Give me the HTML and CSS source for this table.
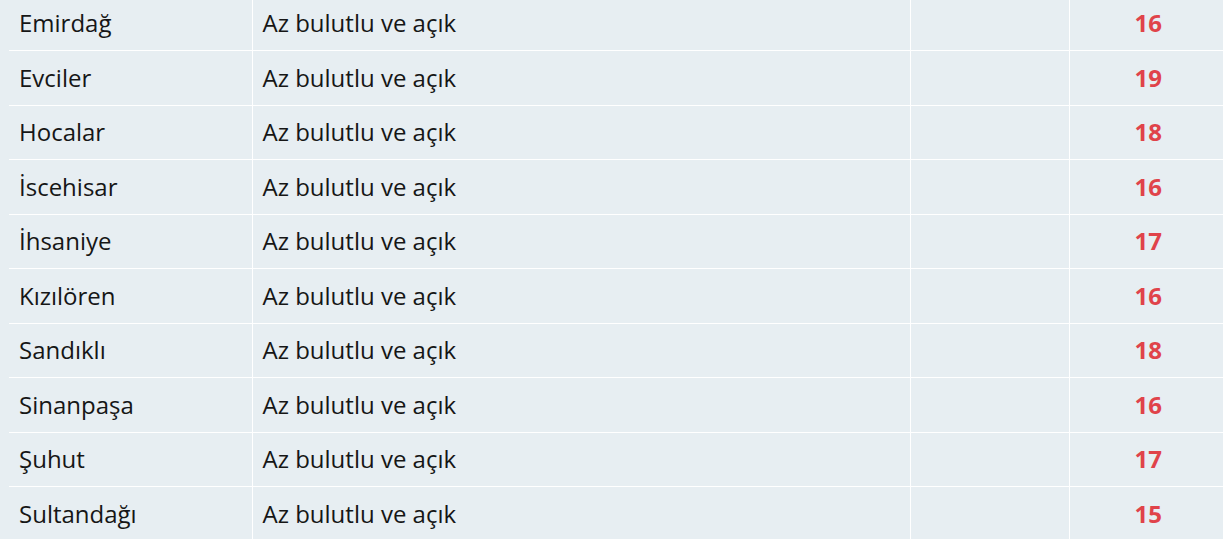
FILE: index.html
```html
<!DOCTYPE html>
<html lang="tr">
<head>
<meta charset="utf-8">
<title>Hava Durumu</title>
<link rel="stylesheet" href="styles.css">
</head>
<body>
<div class="wrap">
<table class="weather">
<colgroup>
<col class="c-name"><col class="c-desc"><col class="c-empty"><col class="c-temp">
</colgroup>
<tbody>
<tr><td>Emirdağ</td><td>Az bulutlu ve açık</td><td></td><td class="temp">16</td></tr>
<tr><td>Evciler</td><td>Az bulutlu ve açık</td><td></td><td class="temp">19</td></tr>
<tr><td>Hocalar</td><td>Az bulutlu ve açık</td><td></td><td class="temp">18</td></tr>
<tr><td>İscehisar</td><td>Az bulutlu ve açık</td><td></td><td class="temp">16</td></tr>
<tr><td>İhsaniye</td><td>Az bulutlu ve açık</td><td></td><td class="temp">17</td></tr>
<tr><td>Kızılören</td><td>Az bulutlu ve açık</td><td></td><td class="temp">16</td></tr>
<tr><td>Sandıklı</td><td>Az bulutlu ve açık</td><td></td><td class="temp">18</td></tr>
<tr><td>Sinanpaşa</td><td>Az bulutlu ve açık</td><td></td><td class="temp">16</td></tr>
<tr><td>Şuhut</td><td>Az bulutlu ve açık</td><td></td><td class="temp">17</td></tr>
<tr><td>Sultandağı</td><td>Az bulutlu ve açık</td><td></td><td class="temp">15</td></tr>
</tbody>
</table>
</div>
</body>
</html>
```

FILE: styles.css
```css
html, body {
  margin: 0;
  padding: 0;
  background: #e7eef2;
  overflow: hidden;
}

.wrap {
  padding-left: 9px;
  margin-top: -3.5px;
}

.weather {
  border-collapse: collapse;
  table-layout: fixed;
  width: 1218px;
  font-family: "Open Sans", "Noto Sans", sans-serif;
  font-size: 24px;
  color: #161616;
}

.c-name { width: 243px; }
.c-desc { width: 658px; }
.c-empty { width: 159px; }
.c-temp { width: 158px; }

.weather td {
  padding: 9.5px 10px;
  line-height: 34.5px;
  border-top: 1px solid #ffffff;
  border-left: 1px solid #ffffff;
  white-space: nowrap;
  text-align: left;
}

.weather tr:first-child td { border-top: none; }
.weather td:first-child { border-left: none; }

.weather td.temp {
  text-align: center;
  font-weight: 700;
  color: #e0434a;
}
```
